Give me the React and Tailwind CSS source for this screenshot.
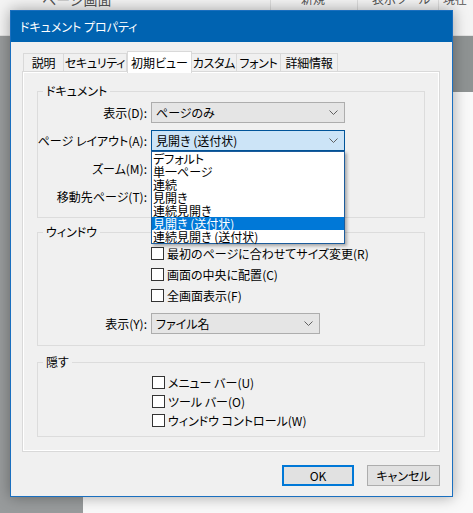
import React from 'react';

// Small chevron used by the combo boxes
const Chevron = () => (
  <svg width="9" height="5" viewBox="0 0 9 5" className="shrink-0">
    <polyline points="0.5,0.5 4.5,4.5 8.5,0.5" fill="none" stroke="#606060" strokeWidth="1" />
  </svg>
);

const Combo = ({ value, width, focused, children }) => (
  <div className={`relative ${width}`}>
    <div
      className={`h-[21px] flex items-center justify-between pl-[4px] pr-[6px] border ${
        focused ? 'bg-[#cce4f7] border-[#005499]' : 'bg-[#e5e5e5] border-[#adadad]'
      }`}
    >
      <span className="leading-[14px] whitespace-nowrap">{value}</span>
      <Chevron />
    </div>
    {children}
  </div>
);

const Check = ({ label, mnemonic, h }) => (
  <div className={`flex items-center ${h}`}>
    <span className="w-[13px] h-[13px] border border-[#333] bg-white shrink-0" />
    <span className="ml-[3px] leading-[14px] whitespace-nowrap">
      {label}({mnemonic})
    </span>
  </div>
);

const Label = ({ children }) => (
  <div className="h-[21px] flex items-center justify-end leading-[14px] whitespace-nowrap">{children}</div>
);

const layoutItems = [
  'デフォルト',
  '単一ページ',
  '連続',
  '見開き',
  '連続見開き',
  '見開き (送付状)',
  '連続見開き (送付状)',
];

const tabs = [
  { name: '説明', w: 'w-[41px]' },
  { name: 'セキュリティ', w: 'w-[64px]' },
  { name: '初期ビュー', w: 'w-[65px]', active: true },
  { name: 'カスタム', w: 'w-[46px]' },
  { name: 'フォント', w: 'w-[45px]' },
  { name: '詳細情報', w: 'w-[58px]' },
];

export default function App() {
  return (
    <div
      className="relative w-[473px] h-[513px] overflow-hidden bg-[#f7f7f7] text-[12px] text-black [font-feature-settings:'palt']"
      style={{ fontFamily: '"Noto Sans CJK JP", "Noto Sans", sans-serif' }}
    >
      {/* Background application behind the dialog */}
      <div className="h-[36px] bg-[#f4f4f4] border-b border-[#e2e2e2] flex text-[#555] overflow-hidden">
        <div className="w-[270px] pl-[42px] -mt-[9px] leading-[16px] text-[14px]">ページ画面</div>
        <div className="w-[87px] border-l border-[#dcdcdc] pl-[30px] -mt-[9px] leading-[16px]">新規</div>
        <div className="w-[81px] border-l border-[#dcdcdc] pl-[14px] -mt-[9px] leading-[16px]">表示ツール</div>
        <div className="flex-1 border-l border-[#dcdcdc] pl-[4px] -mt-[9px] leading-[16px]">現在</div>
      </div>
      <div className="flex h-[477px]">
        <div className="w-[83px] bg-[#989b9c]" />
        <div className="flex-1 flex flex-col">
          <div className="h-[56px] bg-[#8f9393]" />
          <div className="flex-1 bg-[#f9f9f9]" />
        </div>
      </div>

      {/* Dialog window */}
      <div className="absolute left-[10px] top-[10px] w-[443px] h-[487px] border border-[#1a6fbf] bg-[#f0f0f0] flex flex-col shadow-[0_0_14px_rgba(0,0,0,0.35)]">
        <div className="h-[31px] bg-[#0063b1] text-white flex items-center pl-[9px] leading-[14px]">
          ドキュメント プロパティ
        </div>

        <div className="flex flex-col pt-[9px] pl-[11px] pr-[12px]">
          {/* Tabs */}
          <div className="relative z-10 flex items-end h-[21px] ml-[1px]">
            {tabs.map((t) =>
              t.active ? (
                <div
                  key={t.name}
                  className={`${t.w} h-[22px] -mb-[1px] bg-white border border-b-0 border-[#d9d9d9] flex items-center justify-center leading-[14px] whitespace-nowrap`}
                >
                  {t.name}
                </div>
              ) : (
                <div
                  key={t.name}
                  className={`${t.w} h-[19px] bg-[#f0f0f0] border border-[#d9d9d9] -ml-[1px] first:ml-0 flex items-center justify-center leading-[14px] whitespace-nowrap tracking-[-0.3px]`}
                >
                  {t.name}
                </div>
              )
            )}
          </div>

          {/* Tab page */}
          <div className="-mt-[1px] h-[381px] border border-[#d9d9d9] shadow-[inset_1px_1px_0_#fff,inset_-1px_-1px_0_#fff] px-[14px] pt-[11px]">
            {/* ドキュメント */}
            <fieldset className="border border-[#dcdcdc] pb-[10px]">
              <legend className="ml-[5px] px-[3px] leading-[16px]">ドキュメント</legend>
              <div className="grid grid-cols-[109px_194px] gap-x-[4px] gap-y-[7px] pt-[3px]">
                <Label>表示(D):</Label>
                <Combo value="ページのみ" width="w-[194px]" />

                <Label>ページ レイアウト(A):</Label>
                <Combo value="見開き (送付状)" width="w-[194px]" focused>
                  <div className="absolute left-0 top-full w-[194px] z-20 bg-white border border-[#1c5c9c] shadow-[2px_2px_3px_rgba(0,0,0,0.3)]">
                    {layoutItems.map((it) => (
                      <div
                        key={it}
                        className={`h-[13px] leading-[13px] pl-[1px] whitespace-nowrap ${
                          it === '見開き (送付状)' ? 'bg-[#0078d7] text-white' : ''
                        }`}
                      >
                        {it}
                      </div>
                    ))}
                  </div>
                </Combo>

                <Label>ズーム(M):</Label>
                <Combo value="" width="w-[194px]" />

                <Label>移動先ページ(T):</Label>
                <div className="flex items-center">
                  <div className="w-[60px] h-[21px] bg-white border border-[#7a7a7a]" />
                </div>
              </div>
            </fieldset>

            {/* ウィンドウ */}
            <fieldset className="mt-[6px] border border-[#dcdcdc] pb-[11px]">
              <legend className="ml-[5px] px-[3px] leading-[16px]">ウィンドウ</legend>
              <div className="pt-[3px] pl-[113px] flex flex-col">
                <Check label="最初のページに合わせてサイズ変更" mnemonic="R" h="h-[21px]" />
                <Check label="画面の中央に配置" mnemonic="C" h="h-[21px]" />
                <Check label="全画面表示" mnemonic="F" h="h-[21px]" />
              </div>
              <div className="grid grid-cols-[109px_169px] gap-x-[4px] mt-[7px]">
                <Label>表示(Y):</Label>
                <Combo value="ファイル名" width="w-[169px]" />
              </div>
            </fieldset>

            {/* 隠す */}
            <fieldset className="mt-[8px] border border-[#dcdcdc] pb-[6px]">
              <legend className="ml-[5px] px-[3px] leading-[16px]">隠す</legend>
              <div className="pt-[3px] pl-[114px] flex flex-col">
                <Check label="メニュー バー" mnemonic="U" h="h-[19px]" />
                <Check label="ツール バー" mnemonic="O" h="h-[19px]" />
                <Check label="ウィンドウ コントロール" mnemonic="W" h="h-[19px]" />
              </div>
            </fieldset>
          </div>

          {/* Buttons */}
          <div className="flex justify-end gap-[13px] mt-[13px]">
            <button className="w-[72px] h-[21px] bg-[#e1e1e1] border-2 border-[#0078d7] leading-[14px]">OK</button>
            <button className="w-[73px] h-[21px] bg-[#e1e1e1] border border-[#adadad] leading-[14px]">キャンセル</button>
          </div>
        </div>
      </div>
    </div>
  );
}
